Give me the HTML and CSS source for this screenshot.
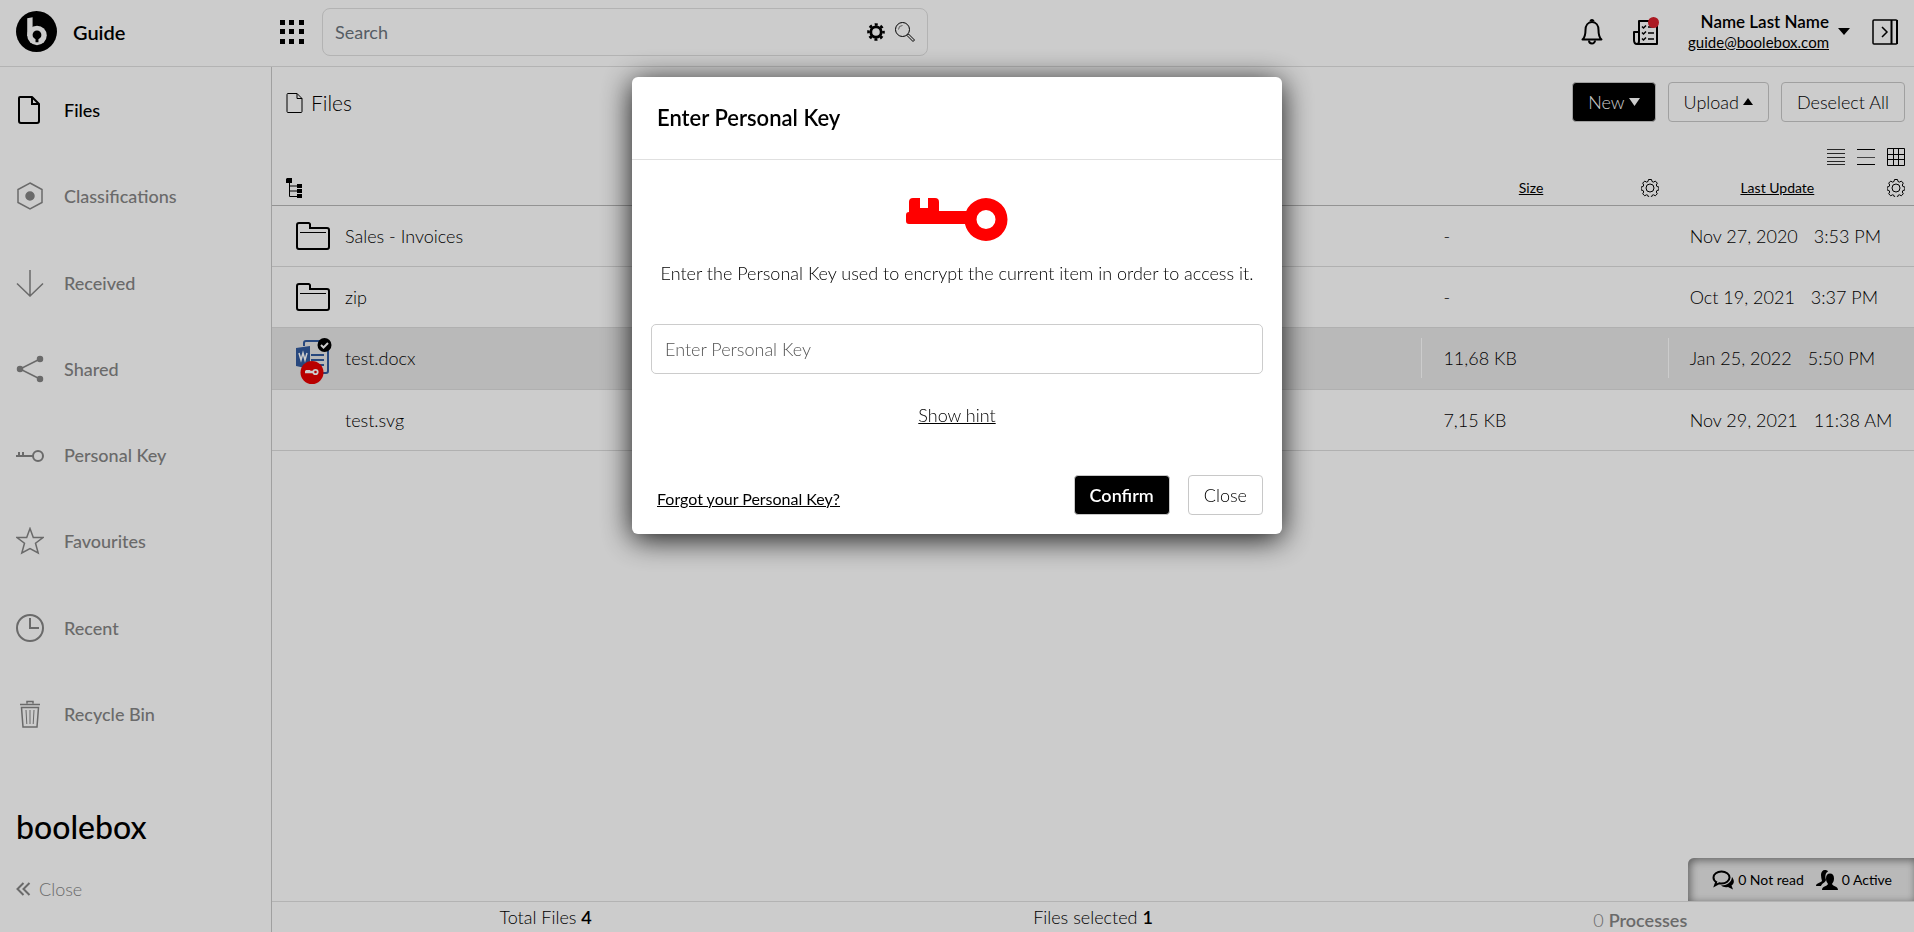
FILE: index.html
```html
<!DOCTYPE html>
<html lang="en">
<head>
    <meta charset="UTF-8">
    <meta name="viewport" content="width=device-width, initial-scale=1.0">
    <title>Boolebox - Files</title>
    <link rel="stylesheet" href="styles.css">
</head>
<body>
    <!-- Header -->
    <header class="header">
        <a href="#" class="brand">
            <svg width="41" height="41" viewBox="0 0 42 42">
                <circle cx="21" cy="21" r="21" fill="#000"/>
                <path d="M11.500 7.500l5.500-1v19h-5.500z" fill="#fff"/>
                <circle cx="21.500" cy="25" r="10" fill="#fff"/>
                <circle cx="21.500" cy="24.500" r="4.500" fill="#000"/>
                <path d="M20 27h3v5h-3z" fill="#000"/>
            </svg>
            <span>Guide</span>
        </a>
        <button class="icon-button apps" aria-label="Apps">
            <svg width="24" height="24" viewBox="0 0 24 24">
                <path d="M0 0h5v5H0zM9 0h5v5H9zM19 0h5v5h-5zM0 9h5v5H0zM9 9h5v5H9zM19 9h5v5h-5zM0 19h5v5H0zM9 19h5v5H9zM19 19h5v5h-5z"/>
            </svg>
        </button>
        <form class="search">
            <input type="text" placeholder="Search" aria-label="Search">
            <button type="button" class="icon-button" aria-label="Search options">
                <svg width="18" height="18" viewBox="0 0 18 18" fill="none" stroke="#000">
                    <circle cx="9" cy="9" r="5.200" stroke-width="2.800"/>
                    <circle cx="9" cy="9" r="7.500" stroke-width="2.600" stroke-dasharray="3 2.890" stroke-dashoffset="1.500"/>
                </svg>
            </button>
            <button type="submit" class="icon-button" aria-label="Search">
                <svg width="20" height="20" viewBox="0 0 20 20" fill="none" stroke="#000">
                    <circle cx="7.500" cy="7.500" r="7"/>
                    <path d="M3.500 7.500a4 4 0 0 1 4-4" stroke="#777"/>
                    <path d="M12 13.500l1.500-1.500 6 6-1.500 1.500z" stroke-linejoin="round"/>
                </svg>
            </button>
        </form>
        <div class="header-right">
            <button class="icon-button alert" aria-label="Notifications">
                <svg width="22" height="26" viewBox="0 0 22 26" fill="none" stroke="#000" stroke-width="2">
                    <path d="M1.500 20.500c2.500-2 3-4.500 3-9.500C4.500 6.500 7 3 11 3s6.500 3.500 6.500 8c0 5 .500 7.500 3 9.500z" stroke-linejoin="round"/>
                    <path d="M9.500 2.500a1.500 1.500 0 0 1 3 0"/>
                    <path d="M8 21.500a3 3 0 0 0 6 0"/>
                </svg>
            </button>
            <button class="icon-button alert" aria-label="Tasks">
                <svg width="27" height="29" viewBox="0 0 27 29" fill="none" stroke="#000" stroke-width="2">
                    <path d="M6 15H2v8c0 3 1 4 3 4h20V4H7v20c0 2-1 3-2 3" stroke-linejoin="round"/>
                    <path d="M16 10h6M16 16h6M16 22h6" stroke-width="1.500"/>
                    <path d="M10 9.500l1.500 1.500L14 8.500M10 15.500l1.500 1.500 2.500-2.500M10 21.500l1.500 1.500 2.500-2.500" stroke-width="1.500"/>
                    <circle cx="21.500" cy="5.500" r="5.500" fill="#d7202b" stroke="none"/>
                </svg>
            </button>
            <div class="user">
                <div class="user-text">
                    <strong>Name Last Name</strong>
                    <a href="#">guide@boolebox.com</a>
                </div>
                <button class="icon-button" aria-label="Account menu">
                    <svg width="12" height="7" viewBox="0 0 12 7"><path d="M0 0h12L6 7z"/></svg>
                </button>
            </div>
            <button class="icon-button" aria-label="Toggle panel">
                <svg width="26" height="26" viewBox="0 0 26 26" fill="none" stroke="#000">
                    <rect x="1" y="1" width="24" height="24" rx="1" stroke-width="1.500"/>
                    <path d="M19.500 1v24M25 1v24" stroke-width="2"/>
                    <path d="M10 8l5 5-5 5" stroke-width="1.500"/>
                </svg>
            </button>
        </div>
    </header>

    <div class="body">
        <!-- Sidebar -->
        <aside class="sidebar">
            <nav class="nav">
                <a href="#" class="nav-item active">
                    <svg width="28" height="28" viewBox="0 0 28 28" stroke-width="2">
                        <path d="M4 1h12l7 7v17a2 2 0 0 1-2 2H5a2 2 0 0 1-2-2V2a1 1 0 0 1 1-1z" stroke-linejoin="round"/>
                        <path d="M16 1v7h7"/>
                    </svg>
                    <span>Files</span>
                </a>
                <a href="#" class="nav-item">
                    <svg width="28" height="28" viewBox="0 0 28 28" stroke-width="1.500">
                        <path d="M14 1l12 6.500v13L14 27 2 20.500v-13z"/>
                        <circle cx="14" cy="14" r="4" fill="currentColor"/>
                    </svg>
                    <span>Classifications</span>
                </a>
                <a href="#" class="nav-item">
                    <svg width="28" height="28" viewBox="0 0 28 28" stroke-width="1.500"><path d="M14 1v26M1 14.500L14 27l13-12.500"/></svg>
                    <span>Received</span>
                </a>
                <a href="#" class="nav-item">
                    <svg width="28" height="28" viewBox="0 0 28 28" stroke-width="1.500">
                        <path d="M24 4L4 14l20 10"/>
                        <g fill="currentColor"><circle cx="24" cy="4" r="2.500"/><circle cx="4" cy="14" r="2.500"/><circle cx="24" cy="24" r="2.500"/></g>
                    </svg>
                    <span>Shared</span>
                </a>
                <a href="#" class="nav-item">
                    <svg width="28" height="28" viewBox="0 0 28 28" stroke-width="2">
                        <path d="M0 15h17M3 15v-4M7 15v-4"/>
                        <circle cx="22" cy="15" r="5"/>
                    </svg>
                    <span>Personal Key</span>
                </a>
                <a href="#" class="nav-item">
                    <svg width="28" height="28" viewBox="0 0 28 28" stroke-width="1.500"><path d="M14 1.500l3.300 9H27l-7.500 5.700 2.700 9.800L14 21.500 5.800 26l2.700-9.800L1 10.500h9.700z"/></svg>
                    <span>Favourites</span>
                </a>
                <a href="#" class="nav-item">
                    <svg width="28" height="28" viewBox="0 0 28 28" stroke-width="2">
                        <circle cx="14" cy="14" r="13"/>
                        <path d="M14 4v10h9"/>
                    </svg>
                    <span>Recent</span>
                </a>
                <a href="#" class="nav-item">
                    <svg width="28" height="28" viewBox="0 0 28 28">
                        <path d="M4 4.500h20M11 3.500V1.500h6v2M5.500 7.500h17L21 27H7z" stroke-width="1.500"/>
                        <path d="M10 10l.800 14M14 10v14M18 10l-.800 14"/>
                    </svg>
                    <span>Recycle Bin</span>
                </a>
            </nav>
            <div class="sidebar-bottom">
                <div class="wordmark">boolebox</div>
                <button class="collapse">
                    <svg width="15" height="14" viewBox="0 0 15 14" fill="none" stroke="currentColor" stroke-width="2"><path d="M7.500 1l-6 6 6 6M13.500 1l-6 6 6 6"/></svg>
                    Close
                </button>
            </div>
        </aside>

        <!-- Files list -->
        <main class="main">
            <div class="toolbar">
                <h1>
                    <svg width="17" height="20" viewBox="0 0 17 20" fill="none" stroke="#000">
                        <path d="M2 .500h9l5 5v13a1 1 0 0 1-1 1H2a1 1 0 0 1-1-1v-17a1 1 0 0 1 1-1z"/>
                        <path d="M11 .500v5h5"/>
                    </svg>
                    Files
                </h1>
                <div class="actions">
                    <button class="button dark">New <svg width="11" height="8" viewBox="0 0 11 8" fill="#fff"><path d="M0 0h11L5.500 8z"/></svg></button>
                    <button class="button">Upload <svg width="10" height="7" viewBox="0 0 10 7"><path d="M0 7h10L5 0z"/></svg></button>
                    <button class="button">Deselect All</button>
                </div>
            </div>
            <div class="views">
                <button class="icon-button" aria-label="Compact list">
                    <svg width="18" height="18" viewBox="0 0 18 18" stroke="#333"><path d="M0 1.500h18M0 5.500h18M0 9.500h18M0 13.500h18M0 16.500h18"/></svg>
                </button>
                <button class="icon-button" aria-label="List">
                    <svg width="18" height="18" viewBox="0 0 18 18" stroke="#000"><path d="M0 1.500h18M0 16.500h18"/><path d="M0 9.500h18" stroke="#555"/></svg>
                </button>
                <button class="icon-button" aria-label="Grid">
                    <svg width="18" height="18" viewBox="0 0 18 18" fill="none" stroke="#000"><path d="M.500 .500h17v17H.500zM6.500 .500v17M11.500 .500v17M.500 6.500h17M.500 11.500h17"/></svg>
                </button>
            </div>
            <table class="files">
                <thead>
                    <tr>
                        <th class="name-col">
                            <button class="icon-button" aria-label="Tree view">
                                <svg width="16" height="20" viewBox="0 0 16 20">
                                    <path d="M1 0h5v5H0V1zM11 6h5v4h-5zM11 11h5v4h-5zM11 16h5v4h-5z"/>
                                    <path d="M3.500 4v14.500H12M3.500 8H12M3.500 13H12" fill="none" stroke="#000"/>
                                </svg>
                            </button>
                        </th>
                        <th class="info-col">
                            <div class="col-head">
                                <a href="#">Size</a>
                                <button class="icon-button" aria-label="Size settings"><svg width="18" height="18" viewBox="0 0 18 18"><use href="#gear"/></svg></button>
                            </div>
                        </th>
                        <th class="info-col">
                            <div class="col-head">
                                <a href="#">Last Update</a>
                                <button class="icon-button" aria-label="Last Update settings">
                                    <svg width="18" height="18" viewBox="0 0 18 18">
                                        <g id="gear" fill="none" stroke="#000" stroke-linejoin="round">
                                            <path d="M7.500 .500h3l.500 2 1.500.600 1.800-1 2 2-1 1.900.600 1.500 2 .500v3l-2 .500-.600 1.500 1 1.800-2 2-1.800-1-1.500.600-.500 2h-3l-.500-2-1.500-.600-1.800 1-2-2 1-1.800-.600-1.500-2-.500v-3l2-.500.600-1.500-1-1.900 2-2 1.800 1 1.500-.600z"/>
                                            <circle cx="9" cy="9" r="4"/>
                                        </g>
                                    </svg>
                                </button>
                            </div>
                        </th>
                    </tr>
                </thead>
                <tbody>
                    <tr>
                        <td>
                            <div class="file">
                                <svg width="36" height="28" viewBox="0 0 36 28"><use href="#folder"/></svg>
                                <span>Sales - Invoices</span>
                            </div>
                        </td>
                        <td>-</td>
                        <td><span class="date">Nov 27, 2020</span>3:53 PM</td>
                    </tr>
                    <tr>
                        <td>
                            <div class="file">
                                <svg width="36" height="28" viewBox="0 0 36 28">
                                    <g id="folder" fill="none" stroke="#000">
                                        <path d="M1 3a2 2 0 0 1 2-2h9.500a1.500 1.500 0 0 1 1.500 1.500V6h17a2 2 0 0 1 2 2v17a2 2 0 0 1-2 2H3a2 2 0 0 1-2-2z" stroke-width="2"/>
                                        <path d="M4 10.500h26"/>
                                    </g>
                                </svg>
                                <span>zip</span>
                            </div>
                        </td>
                        <td>-</td>
                        <td><span class="date">Oct 19, 2021</span>3:37 PM</td>
                    </tr>
                    <tr class="selected">
                        <td>
                            <div class="file">
                                <svg width="36" height="52" viewBox="0 -6 36 52">
                                    <path d="M8 8V5a2 2 0 0 1 2-2h20a2 2 0 0 1 2 2v28a2 2 0 0 1-2 2H18" fill="none" stroke="#325a9e" stroke-width="2"/>
                                    <path d="M15 17h13M15 22h13M15 27h13" stroke="#325a9e" stroke-width="2"/>
                                    <path d="M0 10l14-2v23L0 28z" fill="#325a9e"/>
                                    <path d="M3 15l2 7 2-7 2 7 2-7" fill="none" stroke="#fff" stroke-width="1.500"/>
                                    <circle cx="28.500" cy="7" r="7" fill="#000"/>
                                    <path d="M25 7l2.500 2.500L32 5" fill="none" stroke="#fff" stroke-width="2"/>
                                    <circle cx="16" cy="34.500" r="11.500" fill="#e80000"/>
                                    <path d="M9 34h8M11 34v-2M13 34v-2" stroke="#fff" stroke-width="2.500"/>
                                    <circle cx="19.500" cy="34" r="2.200" fill="none" stroke="#fff" stroke-width="1.800"/>
                                </svg>
                                <span>test.docx</span>
                            </div>
                        </td>
                        <td>11,68 KB</td>
                        <td><span class="date">Jan 25, 2022</span>5:50 PM</td>
                    </tr>
                    <tr>
                        <td><div class="file no-icon"><span>test.svg</span></div></td>
                        <td>7,15 KB</td>
                        <td><span class="date">Nov 29, 2021</span>11:38 AM</td>
                    </tr>
                </tbody>
            </table>
            <div class="spacer"></div>
            <div class="chat">
                <svg width="22" height="20" viewBox="0 0 22 20">
                    <path d="M9.500 1.500c4.500 0 8 2.700 8 6s-3.500 6-8 6c-.800 0-1.500-.100-2.200-.300L3 15.500l1.200-3.500C2.500 11 1.500 9.300 1.500 7.500c0-3.300 3.500-6 8-6z" fill="none" stroke="#000" stroke-width="2"/>
                    <path d="M20 7c3 4 2 7-.500 8.500l1.500 4-5-2.500c-3 .500-5 0-7-1.500 6 0 10.500-3 11-8.500z"/>
                </svg>
                <span>0 Not read</span>
                <svg width="22" height="20" viewBox="0 0 22 20">
                    <path d="M5 5c0-3 1.500-5 4-5 1.500 0 2.500.500 3 1.500C9 3 9 7 10 10c-1 3-4 3-5 6H0c0-3 4-3 6-5C5.500 9 5 7 5 5z"/>
                    <path d="M10 8.500C10 5 11.500 3.500 14 3.500s4 1.500 4 5c0 2.500-1 4-2 5.500 1 2.500 6 2 6 6H6c0-4 5-3.500 6-6-1-1.500-2-3-2-5.500z"/>
                </svg>
                <span>0 Active</span>
            </div>
            <footer class="status">
                <div>Total Files <strong>4</strong></div>
                <div>Files selected <strong>1</strong></div>
                <div class="muted">0 <strong>Processes</strong></div>
            </footer>
        </main>
    </div>

    <!-- Personal key modal -->
    <div class="overlay">
        <div class="modal" role="dialog" aria-labelledby="modalTitle">
            <h2 id="modalTitle">Enter Personal Key</h2>
            <form class="modal-body">
                <svg class="modal-key" width="102" height="43" viewBox="0 0 102 43" fill="#f00">
                    <path d="M0 17a3 3 0 0 1 3-3V4a4 4 0 0 1 4-4h7v10h8V0h7a4 4 0 0 1 4 4v9h28v13H3a3 3 0 0 1-3-3z"/>
                    <path fill-rule="evenodd" d="M80 0a21.500 21.500 0 1 1 0 43 21.500 21.500 0 0 1 0-43zm0 12a9.500 9.500 0 1 0 0 19 9.500 9.500 0 0 0 0-19z"/>
                </svg>
                <label for="personalKey">Enter the Personal Key used to encrypt the current item in order to access it.</label>
                <input type="password" id="personalKey" placeholder="Enter Personal Key">
                <a href="#">Show hint</a>
            </form>
            <div class="modal-footer">
                <a href="#">Forgot your Personal Key?</a>
                <button class="button dark confirm">Confirm</button>
                <button class="button">Close</button>
            </div>
        </div>
    </div>
</body>
</html>
```

FILE: styles.css
```css
/* Basic Reset */
* {
    margin: 0;
    padding: 0;
    box-sizing: border-box;
}

body {
    display: flex;
    flex-direction: column;
    min-height: 100vh;
    background-color: #fff;
    color: #000;
    font-family: Lato, sans-serif;
    font-size: 18px;
    font-weight: 300;
    line-height: 24px;
}

a {
    color: inherit;
}

strong {
    font-weight: 600;
}

svg {
    display: block;
    flex-shrink: 0;
}

button, input {
    font: inherit;
    color: inherit;
}

.icon-button {
    display: block;
    background: none;
    border: none;
    cursor: pointer;
}

/* Header */
.header {
    display: flex;
    align-items: center;
    height: 67px;
    padding: 0 16px 3px;
    border-bottom: 1px solid #e0e0e0;
}

.brand {
    display: flex;
    align-items: center;
    gap: 16px;
    width: 264px;
    font-size: 20px;
    font-weight: 600;
    text-decoration: none;
}

.search {
    display: flex;
    align-items: center;
    gap: 10px;
    flex: 1;
    max-width: 606px;
    height: 48px;
    margin: 0 18px;
    padding: 0 12px;
    border: 1px solid #e0e0e0;
    border-radius: 8px;
}

.search input {
    flex: 1;
    border: none;
    outline: none;
    background: none;
    font-weight: 400;
}

.search input::placeholder {
    color: #6c757d;
}

.header-right {
    display: flex;
    align-items: center;
    gap: 22px;
    margin-left: auto;
}

.alert {
    margin-right: 7px;
}

.user {
    display: flex;
    align-items: center;
    gap: 9px;
}

.user-text {
    display: flex;
    flex-direction: column;
    font-size: 17px;
    line-height: 20px;
    text-align: right;
}

.user-text a {
    font-size: 15px;
    font-weight: 400;
}

/* Sidebar */
.body {
    display: flex;
    flex: 1;
}

.sidebar {
    display: flex;
    flex-direction: column;
    width: 272px;
    border-right: 1px solid #c8c8c8;
}

.nav {
    display: flex;
    flex-direction: column;
    flex: 1;
}

.nav-item {
    display: flex;
    flex: 1;
    align-items: center;
    gap: 20px;
    padding-left: 16px;
    color: #858585;
    font-weight: 500;
    text-decoration: none;
}

.nav-item svg {
    fill: none;
    stroke: currentColor;
}

.nav-item.active {
    color: #000;
}

.sidebar-bottom {
    height: 175px;
    padding: 50px 16px 0;
}

.wordmark {
    margin-bottom: 30px;
    font-size: 32px;
    font-weight: 500;
    line-height: 40px;
}

.collapse {
    display: flex;
    align-items: center;
    gap: 8px;
    background: none;
    border: none;
    color: #858585;
    cursor: pointer;
}

/* Files list */
.main {
    display: flex;
    flex-direction: column;
    flex: 1;
}

.toolbar {
    display: flex;
    align-items: center;
    justify-content: space-between;
    height: 72px;
    padding: 0 9px 0 14px;
}

.toolbar h1 {
    display: flex;
    align-items: center;
    gap: 8px;
    font-size: 21px;
    font-weight: 300;
}

.actions {
    display: flex;
    gap: 12px;
    padding-bottom: 3px;
}

.button {
    display: flex;
    align-items: center;
    gap: 4px;
    height: 40px;
    padding: 0 15px;
    background-color: #fff;
    border: 1px solid #c8c8c8;
    border-radius: 4px;
    cursor: pointer;
}

.button.dark {
    background-color: #000;
    color: #fff;
}

.views {
    display: flex;
    justify-content: flex-end;
    gap: 12px;
    padding: 9px 9px 0;
}

.files {
    width: 100%;
    border-collapse: collapse;
    table-layout: fixed;
}

.files th {
    height: 39px;
    padding-top: 5px;
    border-bottom: 1px solid #b8b8b8;
    font-size: 14px;
    font-weight: 400;
    text-align: left;
}

.files .name-col {
    padding-left: 14px;
}

.info-col {
    width: 15%;
}

.col-head {
    display: flex;
    align-items: center;
    padding-right: 9px;
}

.col-head a {
    flex: 1;
    text-align: center;
}

.files td {
    height: 61px;
    padding-left: 22px;
    border-bottom: 1px solid #dcdcdc;
}

.files .selected td {
    height: 62px;
}

.files .selected {
    background-color: #e8e8e8;
}

.selected td + td {
    background: linear-gradient(#fff, #fff) 0 50% / 1px 40px no-repeat;
}

.file {
    display: flex;
    align-items: center;
    gap: 13px;
    padding-left: 2px;
}

.file.no-icon {
    padding-left: 51px;
}

.date {
    margin-right: 16px;
}

.spacer {
    flex: 1;
}

/* Bottom bar */
.chat {
    display: flex;
    align-items: center;
    align-self: flex-end;
    gap: 4px;
    height: 43px;
    padding: 0 22px 0 24px;
    background-color: #e8e8e8;
    border-top-left-radius: 6px;
    box-shadow: inset 2px 2px 8px #777;
    font-size: 14px;
    font-weight: 400;
}

.chat span + svg {
    margin-left: 8px;
}

.status {
    display: grid;
    grid-template-columns: repeat(3, 1fr);
    height: 31px;
    padding-top: 3px;
    border-top: 1px solid #e0e0e0;
    text-align: center;
}

.muted {
    padding-top: 3px;
    color: #858585;
}

/* Modal */
.overlay {
    position: fixed;
    inset: 0;
    display: flex;
    align-items: flex-start;
    justify-content: center;
    padding-top: 77px;
    background-color: rgba(0, 0, 0, 0.2);
}

.modal {
    width: 100%;
    max-width: 650px;
    background-color: #fff;
    border-radius: 6px;
    box-shadow: 0 5px 30px rgba(0, 0, 0, 0.9);
}

.modal h2 {
    padding: 27px 25px;
    border-bottom: 1px solid #e0e0e0;
    font-size: 22px;
    font-weight: 600;
    line-height: 28px;
}

.modal-body {
    display: flex;
    flex-direction: column;
    align-items: center;
    padding: 38px 19px 0;
}

.modal-key {
    margin-bottom: 20px;
}

.modal-body input {
    width: 100%;
    height: 50px;
    margin: 39px 0 29px;
    padding: 0 13px;
    border: 1px solid #ccc;
    border-radius: 5px;
}

.modal-body input::placeholder {
    color: #555;
}

.modal-footer {
    display: flex;
    align-items: center;
    gap: 18px;
    padding: 48px 19px 19px 25px;
}

.modal-footer a {
    margin-right: auto;
    padding-top: 7px;
    font-size: 16px;
    font-weight: 400;
}

.confirm {
    font-weight: 600;
}
```
